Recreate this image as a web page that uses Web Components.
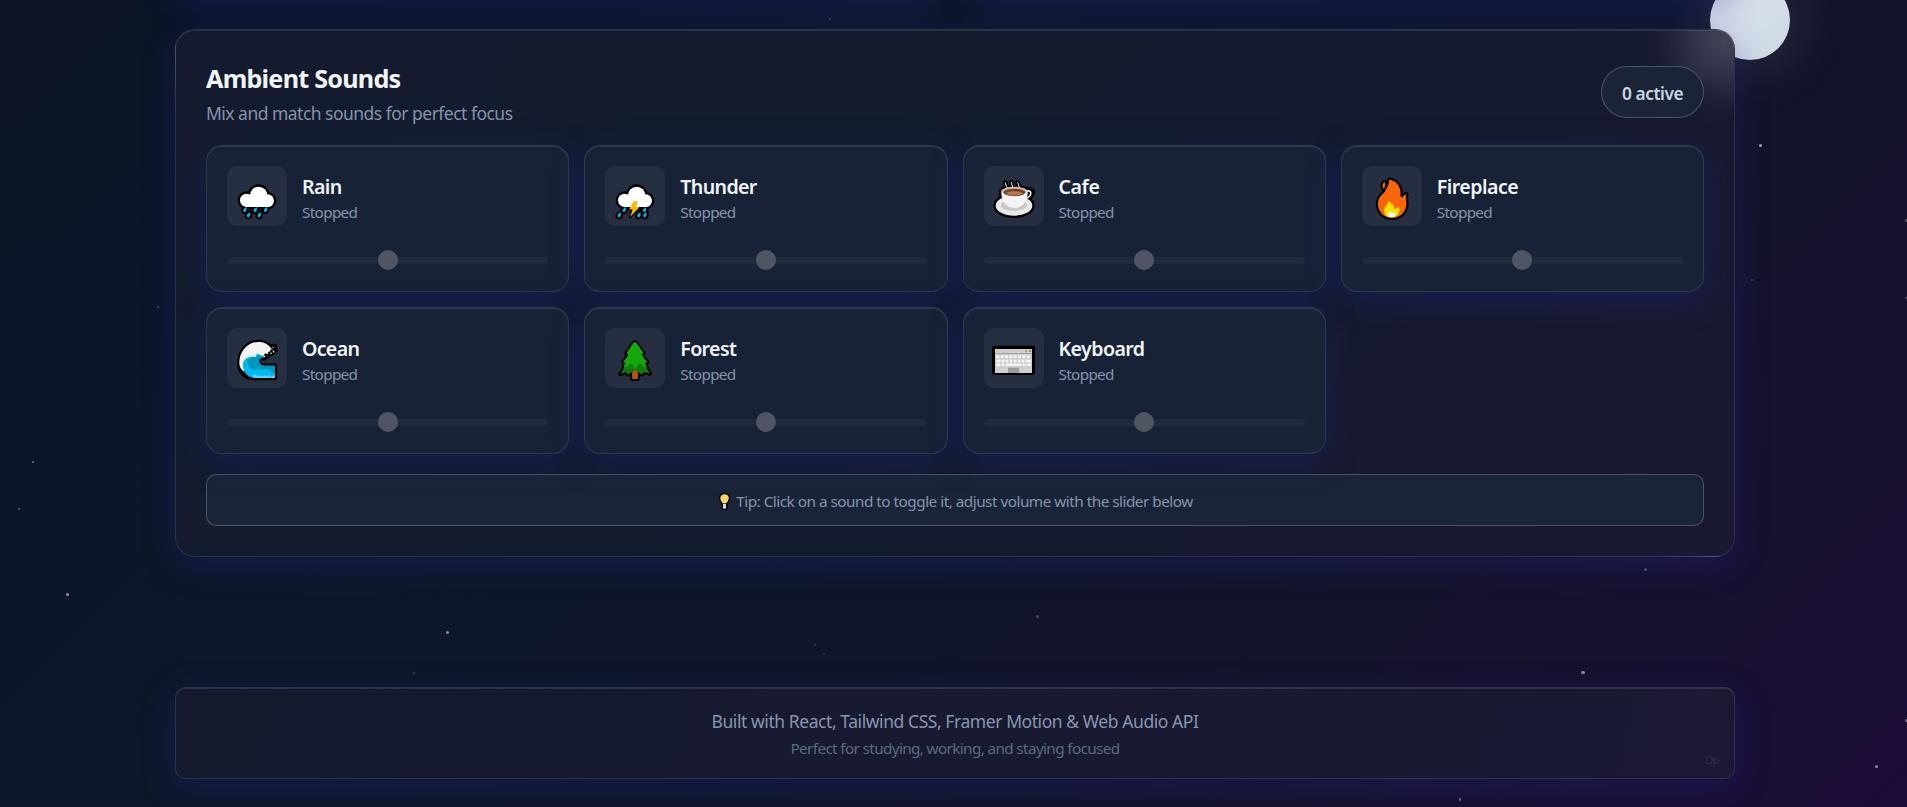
<!DOCTYPE html>
<html lang="en">
<head>
<meta charset="utf-8">
<title>Ambient Sounds</title>
<style>
html,body{margin:0;height:100%;overflow:hidden}
body{font-family:"Noto Sans","Open Sans",sans-serif;color:#f1f5f9;background:#0f172a}
</style>
</head>
<body>
<focus-app></focus-app>
<script>
const define=(name,html,setup)=>{
  const t=document.createElement('template');t.innerHTML=html;
  customElements.define(name,class extends HTMLElement{
    connectedCallback(){
      if(this.shadowRoot)return;
      const r=this.attachShadow({mode:'open'});
      r.appendChild(t.content.cloneNode(true));
      if(setup)setup(this,r);
    }
  });
};

/* One line of text, tracked to a given width */
define('text-line',`<style>:host{display:block;white-space:nowrap}span{display:inline-block}</style><span><slot></slot></span>`,(el,r)=>{
  const s=r.querySelector('span'),w=+el.getAttribute('w');
  const n=el.textContent.length;
  s.style.letterSpacing=((w-s.getBoundingClientRect().width)/n).toFixed(3)+'px';
});

const cloud=`<circle cx="95" cy="88" r="26"/><circle cx="59" cy="103" r="20"/><circle cx="122" cy="104" r="19"/><path d="M58 98H122V123H58Z"/>`;
const drop=(x,y)=>`<path d="M${x+5} ${y-8}C${x+7} ${y} ${x+5} ${y+7} ${x} ${y+7}C${x-8} ${y+6} ${x-5} ${y-3} ${x+5} ${y-8}Z"/>`;
const rainDrops=[[53,131],[84,131],[115,131],[64,147],[96,147]].map(p=>drop(...p)).join('');
const stormDrops=[[57,131],[42,147],[118,131],[101,147],[119,147]].map(p=>drop(...p)).join('');
const bolt='<path d="M86 106H99L93 122L103 124L75 153L83 131L73 129Z"/>';
const edge=(s,w=14)=>`<g fill="#000" stroke="#000" stroke-width="${w}" stroke-linejoin="round">${s}</g>`;
const flame='<path d="M80 42C100 41 120 61 115 90L121 95C124 90 127 87 133 84C129 93 134 100 133 112C134 137 116 156 90 156C65 156 47 137 48 112C49 90 63 86 70 74C75 63 84 54 80 42Z"/><path d="M69 49C60 51 60 63 65 68C71 61 70 56 69 49Z"/>';
const tree='<path d="M90 42C99 49 104 60 116 76L109 77C114 88 119 94 127 102L119 104C123 116 130 129 135 137L116 132L111 140L98 131V153H82V131L68 140L64 132L46 138C55 128 57 116 62 104L54 102C62 94 66 88 71 77L64 76C76 62 80 48 90 42Z"/>';
const wave='<path d="M37 106C36 68 65 39 99 42C112 43 122 49 127 55L143 54L145 69L128 80L111 91C98 89 91 96 97 109L110 113H144V150H80C51 150 37 130 37 106Z"/>';
const cup='<path d="M52 76C53 61 130 61 131 76C132 98 121 126 91 126C62 126 51 98 52 76Z"/>';
const saucer='<ellipse cx="90" cy="119" rx="55" ry="30"/>';
const steam='<path d="M70 65C65 59 66 55 64 50M86 63C82 58 85 54 82 49M106 64C102 58 105 54 101 50"/>';
const keys=()=>{
  let s='';
  for(let i=0;i<8;i++)s+=`<rect x="${37+i*13}" y="82" width="9" height="8"/>`;
  s+='<rect x="37" y="95" width="12" height="8"/>';
  for(let i=0;i<6;i++)s+=`<rect x="${53+i*12}" y="95" width="8" height="8"/>`;
  s+='<rect x="125" y="95" width="16" height="8"/>';
  s+='<rect x="37" y="107" width="12" height="7"/><rect x="53" y="107" width="8" height="7"/><rect x="65" y="107" width="47" height="7"/><rect x="116" y="107" width="8" height="7"/><rect x="128" y="107" width="13" height="7"/>';
  return s;
};
const icons={
  rain:edge(cloud)+edge(rainDrops,13)+`<g fill="#fff">${cloud}</g><g fill="#00b7f1">${rainDrops}</g>`,
  thunder:edge(cloud)+edge(stormDrops,13)+edge(bolt,8)+`<g fill="#fff">${cloud}</g><g fill="#00b7f1">${stormDrops}</g><g fill="#ffb900">${bolt}</g>`,
  cafe:edge(saucer)+edge(cup)+`<g fill="none" stroke="#000" stroke-width="15" stroke-linecap="round">${steam}</g><path d="M130 74C150 67 148 91 123 97" fill="none" stroke="#000" stroke-width="19"/>
    <g fill="#e9e9e9">${saucer}</g><ellipse cx="90" cy="118" rx="39" ry="17" fill="#c8c8c8"/>
    <path d="M128 76C145 69 145 91 124 97" fill="none" stroke="#f4f4f4" stroke-width="5"/>
    <g fill="#f4f4f4">${cup}</g><ellipse cx="91" cy="76" rx="37" ry="14" fill="#bdbdbd"/><ellipse cx="91" cy="79" rx="33" ry="11" fill="#7c4023"/><ellipse cx="91" cy="82" rx="25" ry="6" fill="#b9794b"/>
    <g fill="none" stroke="#fff" stroke-width="3" stroke-linecap="round">${steam}</g>`,
  fire:edge(flame,13)+`<g fill="#f9650b">${flame}</g><path d="M79 105C87 109 95 117 98 129C101 129 103 127 105 124C109 124 113 124 113 130C113 146 103 154 90 154C77 154 66 147 66 134C66 121 79 118 79 105Z" fill="#fde000"/><path d="M84 133L91 142L94 139L101 142V148Q97 153 90 153Q82 153 78 148V142H83Z" fill="#fff"/>`,
  ocean:edge(wave,13)+`<path d="M37 106C36 68 65 39 99 42C112 43 124 50 132 60L138 67L128 70L123 79L114 76L108 86L98 80L88 89L60 90L48 106L53 132C42 126 37 117 37 106Z" fill="#f2f2f2"/>
    <path d="M48 104C54 88 76 84 86 88L90 76C98 83 111 83 115 88C101 86 90 94 96 107Q101 115 112 113H144V150H84C61 150 46 132 48 104Z" fill="#00b9f0"/>
    <path d="M61 100C67 87 80 84 90 88L92 80L107 88C93 91 92 107 110 113H144V137C132 137 128 118 113 124C103 129 98 122 91 124C76 127 61 120 61 100Z" fill="#0097bd"/>
    <path d="M75 143L87 139L93 146L100 141L106 146L113 141L119 146L126 141L132 146L144 141V150H83Z" fill="#5bd5fa"/>
    <g fill="#000"><circle cx="118" cy="81" r="3"/><circle cx="126" cy="74" r="3"/><circle cx="133" cy="67" r="3"/></g><g fill="#fff"><circle cx="112" cy="85" r="2.5"/><circle cx="132" cy="76" r="2.5"/><circle cx="140" cy="71" r="2.5"/><circle cx="138" cy="58" r="2"/></g>`,
  forest:edge(tree,12)+`<g fill="#107c10">${tree}</g><path d="M90 42C99 49 104 60 116 76L109 77C114 88 119 94 127 102L119 104L126 119L113 113L109 106L101 110L90 124L81 109L73 107L70 114L55 118L62 104L54 102C62 94 66 88 71 77L64 76C76 62 80 48 90 42Z" fill="#16a70e"/><path d="M82 153V133L90 125L98 133V153Z" fill="#ca5010"/>`,
  keyboard:`<rect x="24" y="53" width="129" height="88" rx="7"/><rect x="33" y="63" width="111" height="72" fill="#cfcfcf"/><rect x="33" y="75" width="111" height="3" fill="#9f9f9f"/><g fill="#f5f5f5">${keys()}</g><rect x="72" y="119" width="33" height="16" fill="#9c9c9c"/><rect x="36" y="66" width="5" height="5" fill="#f2d21b"/><rect x="123" y="66" width="6" height="6" fill="#8cc152"/><rect x="135" y="66" width="6" height="6" fill="#e8684a"/>`
};

define('sound-icon',`<style>:host{display:block;width:60px;height:60px;border-radius:10px;background:rgba(255,255,255,.06);flex:none}svg{display:block}</style><svg width="60" height="60" viewBox="0 0 180 180"></svg>`,(el,r)=>{
  r.querySelector('svg').innerHTML=icons[el.getAttribute('name')]||'';
});

define('volume-slider',`<style>
:host{display:grid;height:21px;align-items:center;justify-items:center}
i,b{grid-area:1/1}
i{width:100%;height:7px;border-radius:4px;background:#1f2a3e}
b{width:20px;height:20px;border-radius:50%;background:#505564;margin-bottom:1px}
</style><i></i><b></b>`);

define('sound-card',`<style>
:host{display:block;box-sizing:border-box;height:147px;padding:20px;border:1px solid rgba(255,255,255,.1);border-radius:16px;background:#182236;box-shadow:0 8px 32px rgba(31,38,135,.37),inset 0 1px 0 rgba(255,255,255,.1)}
.row{display:flex;gap:15px;align-items:center;margin-bottom:24px}
.txt{padding-top:4px}
.name{font-size:19.6px;font-weight:600;line-height:26px;color:#f1f5f9}
.st{font-size:15.3px;line-height:22px;margin-top:1px;color:#8494ad}
</style><div class="row"><sound-icon></sound-icon><div class="txt"><text-line class="name"></text-line><text-line class="st" w="55.3">Stopped</text-line></div></div><volume-slider></volume-slider>`);

const sounds=[['rain','Rain',39.5],['thunder','Thunder',76.5],['cafe','Cafe',41],['fire','Fireplace',81.5],['ocean','Ocean',57.2],['forest','Forest',56],['keyboard','Keyboard',86]];

define('sound-grid',`<style>:host{display:grid;grid-template-columns:repeat(4,1fr);gap:15px}</style>`,(el,r)=>{
  for(const [icon,name,w] of sounds){
    const c=document.createElement('sound-card');
    r.appendChild(c);
    const ic=document.createElement('sound-icon');
    ic.setAttribute('name',icon);
    c.shadowRoot.querySelector('sound-icon').replaceWith(ic);
    const label=document.createElement('text-line');
    label.className='name';label.setAttribute('w',w);label.textContent=name;
    c.shadowRoot.querySelector('.name').replaceWith(label);
  }
});

define('glass-panel',`<style>
:host{display:block;box-sizing:border-box;position:relative;border:1px solid rgba(255,255,255,.1);border-radius:20px;background:var(--glass,#141b2e) border-box;box-shadow:0 8px 32px rgba(31,38,135,.37),inset 0 1px 0 rgba(255,255,255,.1)}
</style><slot></slot>`);

define('tip-bar',`<style>
:host{display:flex;box-sizing:border-box;height:52px;align-items:center;justify-content:center;gap:6.5px;border:1px solid rgba(255,255,255,.22);border-radius:10px;background:#1a2438;color:#8494ad;font-size:15.3px;line-height:22px;padding:2px 0 0 1.5px}
svg{display:block}
</style><svg width="11" height="17" viewBox="0 0 33 51"><path d="M16.5 0C36 0 37 22 26 33V46Q25 51 16.5 51Q9 51 8 46V33C-4 22-3 0 16.5 0Z"/><path d="M16.5 4C32 4 33 20 22 31H11C0 20 2 4 16.5 4Z" fill="#ffd264"/><path d="M12 32H21V46Q17 49 12 46Z" fill="#d8dce0"/></svg><text-line w="456.5">Tip: Click on a sound to toggle it, adjust volume with the slider below</text-line>`);

/* [x, y, size, opacity] */
const stars=[[830,19,2,.2],[1760.5,145.5,3,.6],[1906,220.5,3,.3],[1752,280,2,.22],[158,307,2,.25],[33,462,2,.4],[19,509,2,.3],[67.5,594.5,3,.55],[447.5,632.5,3,.5],[414,673,2,.2],[815,645,2,.18],[824,654,2,.15],[1037,616.5,3,.22],[1645,569.5,3,.28],[1583,672.5,3.4,.5],[1906,720,3,.4],[1876.5,766.5,3,.5],[1460,799.5,2.4,.4],[1906,298,2,.25]];
define('night-sky',`<style>
:host{position:absolute;inset:0;overflow:hidden;background:linear-gradient(135deg,#0c1426 0%,#0e172a 35%,#10152a 55%,#12142a 68%,#16122e 80%,#190f32 90%,#1c0c36 100%)}
i{position:absolute;border-radius:50%;background:#fff}
.moon{left:1710px;top:-20px;width:80px;height:80px;background:linear-gradient(135deg,#e2e5f1,#cbd8e3);box-shadow:0 0 60px rgba(226,232,240,.17)}
</style><i class="moon"></i>`,(el,r)=>{
  for(const [x,y,d,o] of stars){
    const s=document.createElement('i');
    s.style.cssText=`left:${x-d/2}px;top:${y-d/2}px;width:${d}px;height:${d}px;opacity:${o}`;
    r.appendChild(s);
  }
});

define('focus-app',`<style>
:host{display:block;position:relative;height:807px;overflow:hidden}
main{position:relative;width:1560px;margin-left:175px}
.above{display:grid;grid-template-columns:1fr 1fr;gap:30px;height:200px;margin-top:-201px;margin-bottom:30px}
.sounds{height:528px;padding:30px;--glass:radial-gradient(circle 75px at 1548px 12px,rgba(150,155,170,.33),rgba(150,155,170,.22) 35%,rgba(150,155,170,.06) 75%,transparent),linear-gradient(135deg,#151b2e 0%,#131b2d 40%,#151a2e 65%,#1a1933 100%)}
header{display:flex;justify-content:space-between;align-items:center;height:64px;margin-bottom:21px}
.title{font-size:25.2px;font-weight:700;line-height:36px}
.sub{font-size:17.5px;line-height:24px;margin-top:5px;color:#8494ad}
.pill{box-sizing:border-box;width:103px;height:52px;padding:3px 0 0 20px;border:1px solid rgba(255,255,255,.22);border-radius:26px;background:#1a2436;font-size:17.3px;font-weight:600;line-height:48px;color:#cbd5e1}
tip-bar{margin-top:20px}
.foot{height:92px;margin-top:130px;padding:20px 0;border-radius:10px;text-align:center;--glass:linear-gradient(100deg,#141b2d,#171a30 40%,#1b1934)}
.f1{font-size:17.5px;line-height:26px;color:#8796ae}
.f2{font-size:15.3px;line-height:22px;margin-top:3px;color:#596a85}
.dp{position:absolute;right:15px;bottom:10px;font-size:11.6px;line-height:16px;color:#2b3350}
</style>
<night-sky></night-sky>
<main>
<div class="above"><glass-panel></glass-panel><glass-panel></glass-panel></div>
<glass-panel class="sounds">
<header><div><text-line class="title" w="194.5">Ambient Sounds</text-line><text-line class="sub" w="306.5">Mix and match sounds for perfect focus</text-line></div><div class="pill"><text-line w="61.3">0 active</text-line></div></header>
<sound-grid></sound-grid>
<tip-bar></tip-bar>
</glass-panel>
<glass-panel class="foot">
<text-line class="f1" w="487">Built with React, Tailwind CSS, Framer Motion &amp; Web Audio API</text-line>
<text-line class="f2" w="329">Perfect for studying, working, and staying focused</text-line>
<text-line class="dp" w="14">Dp</text-line>
</glass-panel>
</main>`);
</script>
</body>
</html>
